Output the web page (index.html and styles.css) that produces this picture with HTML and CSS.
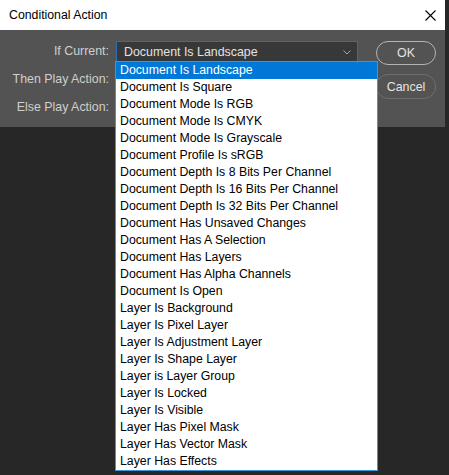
FILE: index.html
```html
<!DOCTYPE html>
<html>
<head>
<meta charset="utf-8">
<link rel="stylesheet" href="styles.css">
</head>
<body>
<div class="window">
  <div class="titlebar">
    <span class="title">Conditional Action</span>
    <svg class="close" width="11" height="11" viewBox="0 0 11 11"><path d="M0.5 0.5 L10.5 10.5 M10.5 0.5 L0.5 10.5" stroke="#000" stroke-width="1.1" fill="none"/></svg>
  </div>
  <div class="content">
    <div class="fields">
      <span class="label">If Current:</span>
      <div class="select active"><span>Document Is Landscape</span><svg class="chev" width="8" height="5" viewBox="0 0 8 5"><path d="M0.5 0.5 L4 4 L7.5 0.5" stroke="#a8a8a8" stroke-width="1" fill="none"/></svg></div>
      <span class="label">Then Play Action:</span>
      <div class="select"></div>
      <span class="label">Else Play Action:</span>
      <div class="select"></div>
    </div>
    <div class="buttons">
      <button class="btn ok">OK</button>
      <button class="btn cancel">Cancel</button>
    </div>
    <ul class="listbox">
      <li class="selected">Document Is Landscape</li>
      <li>Document Is Square</li>
      <li>Document Mode Is RGB</li>
      <li>Document Mode Is CMYK</li>
      <li>Document Mode Is Grayscale</li>
      <li>Document Profile Is sRGB</li>
      <li>Document Depth Is 8 Bits Per Channel</li>
      <li>Document Depth Is 16 Bits Per Channel</li>
      <li>Document Depth Is 32 Bits Per Channel</li>
      <li>Document Has Unsaved Changes</li>
      <li>Document Has A Selection</li>
      <li>Document Has Layers</li>
      <li>Document Has Alpha Channels</li>
      <li>Document Is Open</li>
      <li>Layer Is Background</li>
      <li>Layer Is Pixel Layer</li>
      <li>Layer Is Adjustment Layer</li>
      <li>Layer Is Shape Layer</li>
      <li>Layer is Layer Group</li>
      <li>Layer Is Locked</li>
      <li>Layer Is Visible</li>
      <li>Layer Has Pixel Mask</li>
      <li>Layer Has Vector Mask</li>
      <li>Layer Has Effects</li>
    </ul>
  </div>
</div>
</body>
</html>
```
FILE: styles.css
```css
html, body {
  margin: 0;
  padding: 0;
}
body {
  background: #272727;
  width: 449px;
  height: 475px;
  overflow: hidden;
  font-family: "Liberation Sans", Arial, sans-serif;
  font-size: 12px;
}
.window {
  width: 445px;
}
.titlebar {
  height: 30px;
  background: #ffffff;
  display: flex;
  align-items: center;
  justify-content: space-between;
  padding: 0 9px 0 9px;
  box-sizing: border-box;
}
.title {
  color: #000;
  font-size: 12.3px;
  padding-bottom: 1px;
}
.close {
  display: block;
}
.content {
  position: relative;
  height: 97px;
  background: #535353;
  box-sizing: border-box;
  padding-top: 11px;
  display: flex;
  align-items: flex-start;
}
.fields {
  display: grid;
  grid-template-columns: 109px 242px;
  grid-auto-rows: 21px;
  column-gap: 7px;
  row-gap: 7px;
}
.label {
  color: #cfcfcf;
  text-align: right;
  align-self: center;
  line-height: 21px;
  font-size: 12.4px;
}
.select {
  box-sizing: border-box;
  background: #3a3a3a;
  border: 1px solid #505050;
  display: flex;
  align-items: center;
  justify-content: space-between;
  padding: 0 6px 0 7px;
  color: #e2e2e2;
  font-size: 12.4px;
}
.select.active {
  border-color: #2e6db2;
  background: #383838;
}
.chev {
  display: block;
  margin-top: 1px;
}
.buttons {
  margin-left: 18px;
  display: flex;
  flex-direction: column;
  gap: 9px;
}
.btn {
  width: 60px;
  height: 24px;
  border-radius: 12px;
  background: #535353;
  color: #e4e4e4;
  font-family: "Liberation Sans", Arial, sans-serif;
  font-size: 12.4px;
  padding: 0;
  box-sizing: border-box;
}
.ok {
  border: 1px solid #b4b4b4;
}
.cancel {
  height: 25px;
  border: 1px solid #6e6e6e;
}
.listbox {
  position: absolute;
  left: 115px;
  top: 31px;
  width: 263px;
  margin: 0;
  padding: 0;
  list-style: none;
  background: #ffffff;
  border: 1px solid #3b96da;
  box-sizing: border-box;
}
.listbox li {
  height: 17px;
  line-height: 17px;
  padding-left: 4px;
  color: #000;
  white-space: nowrap;
  font-size: 12.3px;
}
.listbox li.selected {
  background: #0078d7;
  color: #ffffff;
}
```
